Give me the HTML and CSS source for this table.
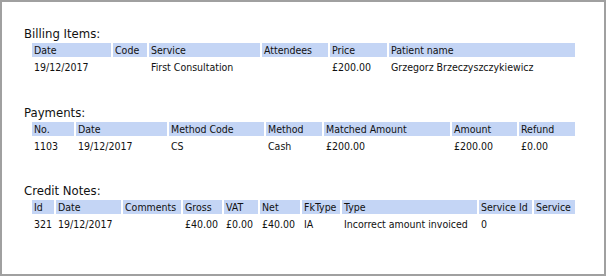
FILE: index.html
```html
<!DOCTYPE html>
<html>
<head>
<meta charset="utf-8">
<link rel="stylesheet" href="styles.css">
</head>
<body>
<div class="frame">
  <div class="section">
    <div class="title">Billing Items:</div>
    <table class="grid billing">
      <tr><th>Date</th><th>Code</th><th>Service</th><th>Attendees</th><th>Price</th><th>Patient name</th></tr>
      <tr><td>19/12/2017</td><td></td><td>First Consultation</td><td></td><td>£200.00</td><td>Grzegorz Brzeczyszczykiewicz</td></tr>
    </table>
  </div>
  <div class="section">
    <div class="title">Payments:</div>
    <table class="grid payments">
      <tr><th>No.</th><th>Date</th><th>Method Code</th><th>Method</th><th>Matched Amount</th><th>Amount</th><th>Refund</th></tr>
      <tr><td>1103</td><td>19/12/2017</td><td>CS</td><td>Cash</td><td>£200.00</td><td>£200.00</td><td>£0.00</td></tr>
    </table>
  </div>
  <div class="section">
    <div class="title">Credit Notes:</div>
    <table class="grid credits">
      <tr><th>Id</th><th>Date</th><th>Comments</th><th>Gross</th><th>VAT</th><th>Net</th><th>FkType</th><th>Type</th><th>Service Id</th><th>Service</th></tr>
      <tr><td>321</td><td>19/12/2017</td><td></td><td>£40.00</td><td>£0.00</td><td>£40.00</td><td>IA</td><td>Incorrect amount invoiced</td><td>0</td><td></td></tr>
    </table>
  </div>
</div>
</body>
</html>
```
FILE: styles.css
```css
html, body {
  margin: 0;
  padding: 0;
  background: #ffffff;
}
.frame {
  box-sizing: border-box;
  width: 606px;
  height: 276px;
  border: 2px solid #a0a0a0;
  padding: 24px 0 0 22px;
  font-family: "DejaVu Sans Condensed", "DejaVu Sans", sans-serif;
  font-stretch: condensed;
  color: #111;
}
.section {
  margin-bottom: 29px;
}
.section + .section + .section {
  margin-top: -1px;
}
.title {
  font-size: 13px;
  line-height: 15px;
}
.grid {
  margin-left: 6px;
  border-collapse: separate;
  border-spacing: 2px;
  table-layout: fixed;
  width: 547px;
  font-size: 10.5px;
}
.grid th {
  background: #c4d5f5;
  font-weight: normal;
  text-align: left;
  padding: 0 2px;
  height: 14px;
  line-height: 14px;
  white-space: nowrap;
  overflow: hidden;
}
.grid td {
  padding: 1px 2px 0;
  height: 14px;
  line-height: 14px;
  white-space: nowrap;
}
.billing th:nth-child(1) { width: 75px; }
.billing th:nth-child(2) { width: 30px; }
.billing th:nth-child(3) { width: 107px; }
.billing th:nth-child(4) { width: 62px; }
.billing th:nth-child(5) { width: 53px; }

.payments th:nth-child(1) { width: 38px; }
.payments th:nth-child(2) { width: 87px; }
.payments th:nth-child(3) { width: 91px; }
.payments th:nth-child(4) { width: 52px; }
.payments th:nth-child(5) { width: 122px; }
.payments th:nth-child(6) { width: 61px; }

.credits th:nth-child(1) { width: 18px; }
.credits th:nth-child(2) { width: 61px; }
.credits th:nth-child(3) { width: 54px; }
.credits th:nth-child(4) { width: 35px; }
.credits th:nth-child(5) { width: 30px; }
.credits th:nth-child(6) { width: 36px; }
.credits th:nth-child(7) { width: 34px; }
.credits th:nth-child(8) { width: 131px; }
.credits th:nth-child(9) { width: 49px; }
```
